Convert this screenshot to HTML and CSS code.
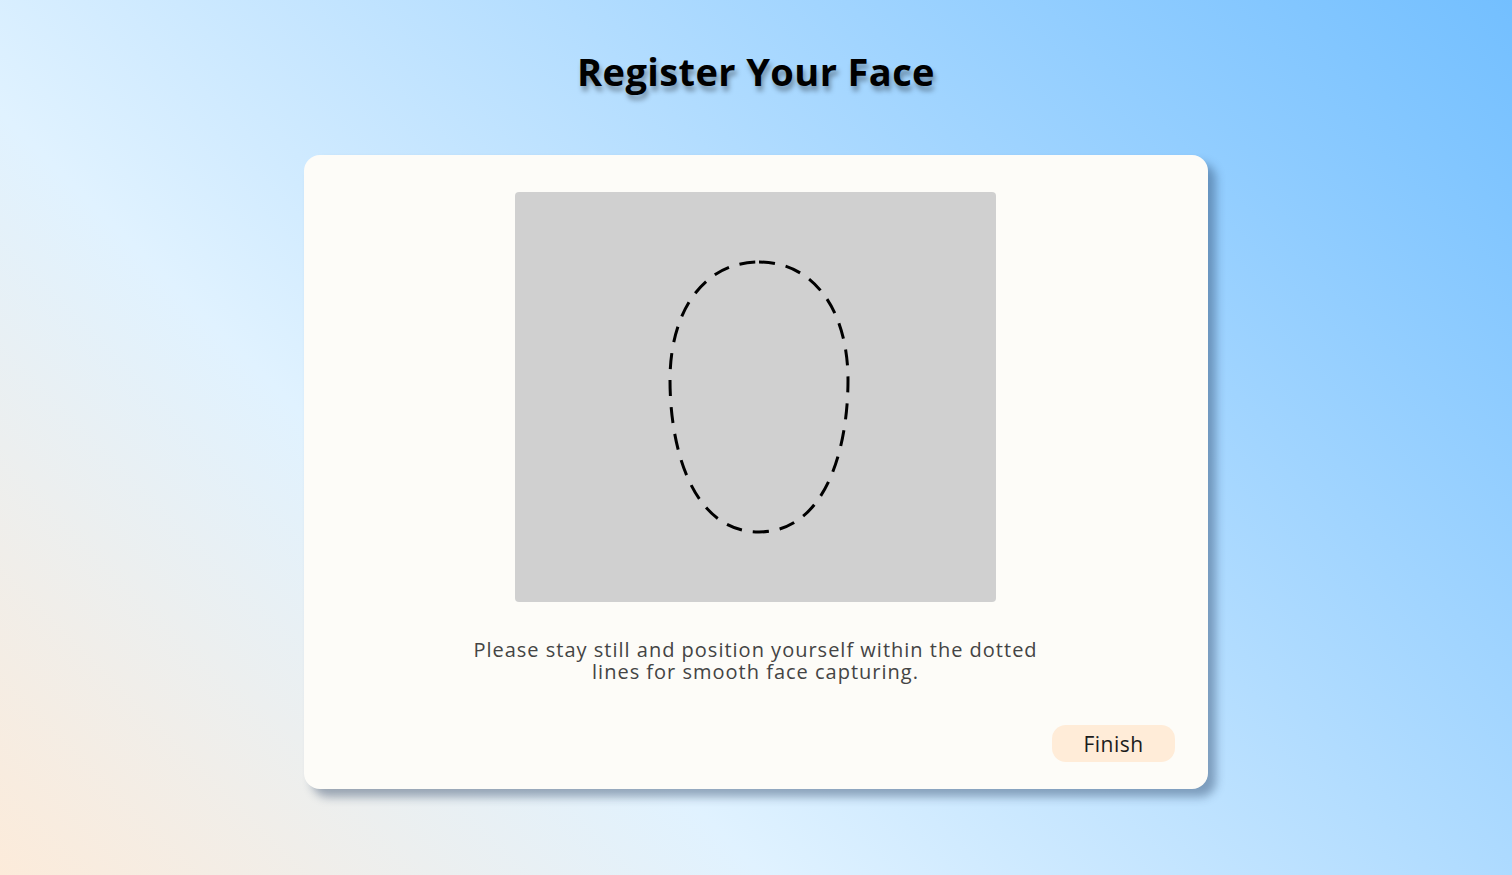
FILE: index.html
```html
<!DOCTYPE html>
<html lang="en">
<head>
<meta charset="utf-8">
<title>Register Your Face</title>
<link rel="stylesheet" href="styles.css">
</head>
<body>
<main class="page">
  <h1 class="title">Register Your Face</h1>
  <section class="card">
    <div class="camera">
      <svg class="outline" width="481" height="410" viewBox="0 0 481 410" aria-hidden="true">
        <path d="M244,70 C300,70 333,120 333,188 C333,258 310,340 244,340 C178,340 155,258 155,188 C155,120 188,70 244,70 Z"
              fill="none" stroke="#000" stroke-width="3" stroke-dasharray="16 11" stroke-linecap="butt"/>
      </svg>
    </div>
    <p class="hint">Please stay still and position yourself within the dotted lines for smooth face capturing.</p>
    <div class="actions">
      <button class="finish" type="button">Finish</button>
    </div>
  </section>
</main>
</body>
</html>
```

FILE: styles.css
```css
html, body {
  margin: 0;
  padding: 0;
  height: 100%;
}

body {
  font-family: "Open Sans", "DejaVu Sans", sans-serif;
  background: linear-gradient(45deg, #fcebda 0%, #e0f2ff 32%, #73bfff 100%);
  min-height: 875px;
  overflow: hidden;
}

.page {
  display: flex;
  flex-direction: column;
  align-items: center;
}

.title {
  margin: 45px 0 0;
  height: 52px;
  font-size: 38px;
  line-height: 52px;
  font-weight: 700;
  color: #000;
  letter-spacing: 0.4px;
  text-shadow: 2px 5px 5px rgba(0, 0, 0, 0.35);
}

.card {
  margin-top: 58px;
  width: 904px;
  height: 634px;
  box-sizing: border-box;
  background: #fdfcf8;
  border-radius: 16px;
  box-shadow: 8px 8px 10px rgba(30, 55, 90, 0.4);
  padding: 37px 33px 27px 32px;
  display: flex;
  flex-direction: column;
  align-items: center;
}

.camera {
  width: 481px;
  height: 410px;
  background: #d0d0d0;
  border-radius: 4px;
  flex: none;
}

.outline {
  display: block;
}

.hint {
  margin: 37px 0 0;
  width: 595px;
  text-align: center;
  font-size: 20px;
  line-height: 22px;
  letter-spacing: 1px;
  color: #444;
}

.actions {
  margin-top: auto;
  align-self: stretch;
  display: flex;
  justify-content: flex-end;
}

.finish {
  width: 123px;
  height: 37px;
  border: none;
  border-radius: 14px;
  background: #ffecd8;
  color: #1c1c1c;
  font-family: inherit;
  font-size: 21px;
  letter-spacing: 0.5px;
  padding: 0;
  cursor: pointer;
}
```
